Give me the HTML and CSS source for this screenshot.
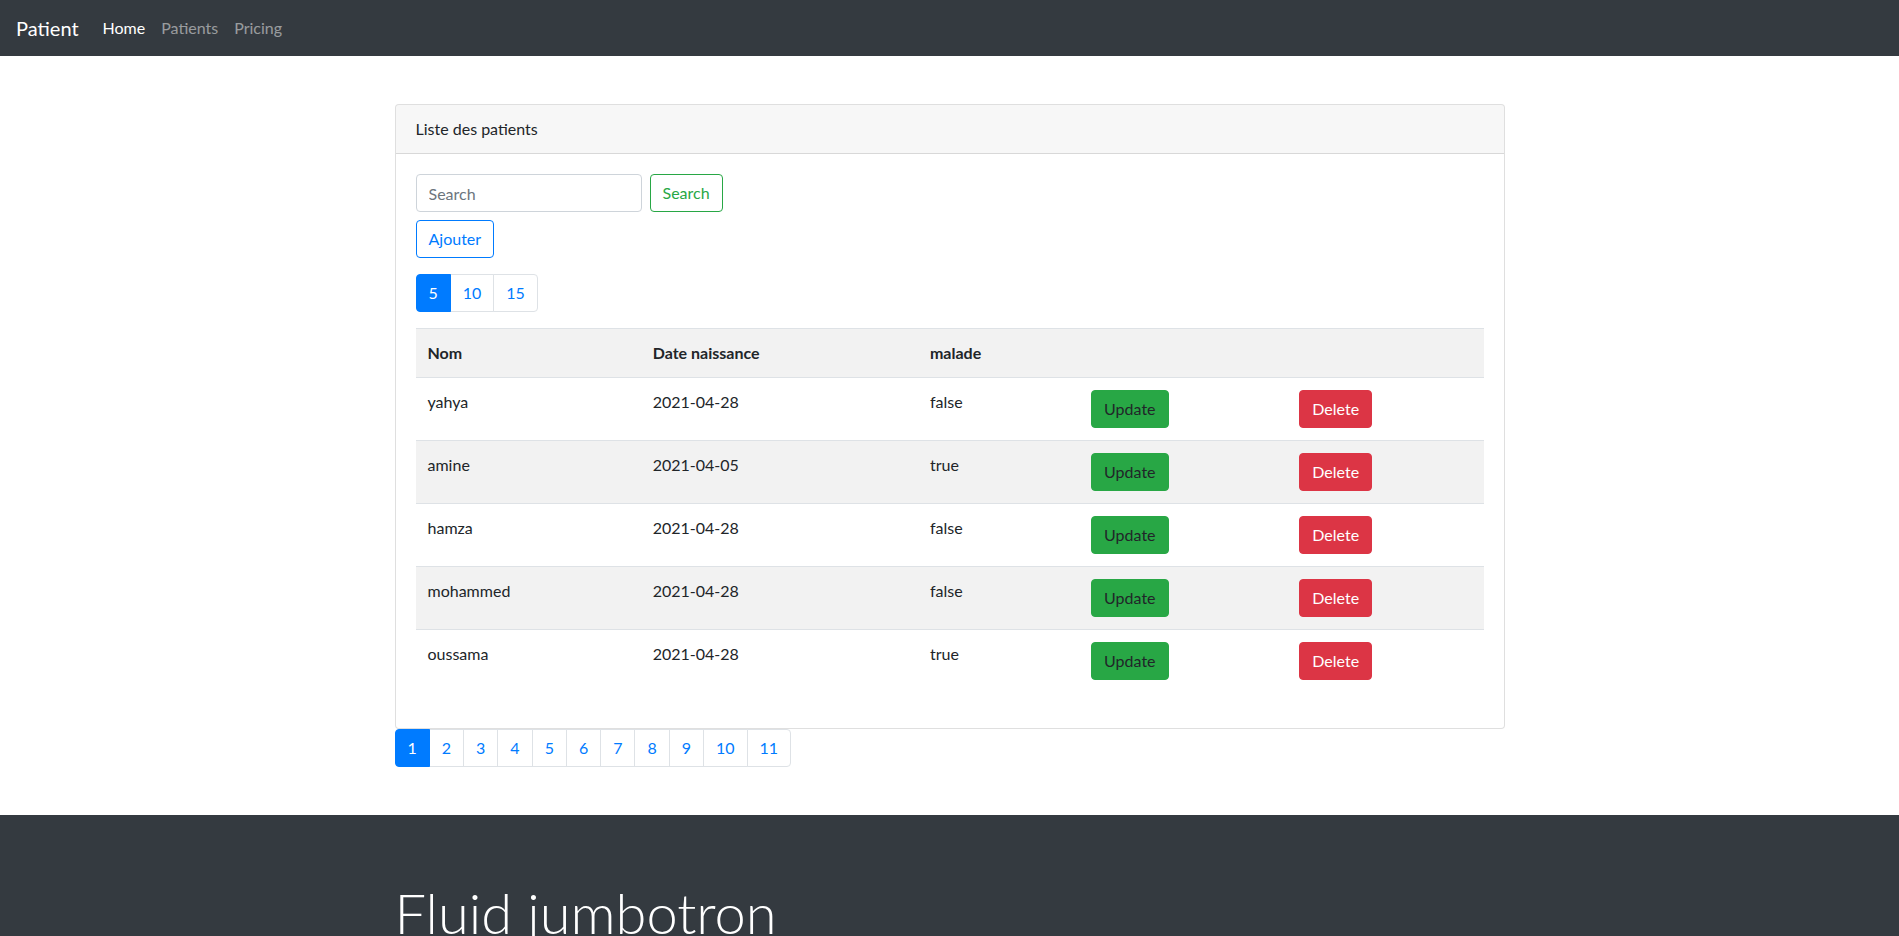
FILE: index.html
```html
<!DOCTYPE html>
<html lang="fr">
<head>
<meta charset="utf-8">
<title>Patients</title>
<link rel="stylesheet" href="styles.css">
</head>
<body>
<nav class="navbar">
  <a class="brand" href="#">Patient</a>
  <ul class="nav">
    <li><a class="nav-link active" href="#">Home</a></li>
    <li><a class="nav-link" href="#">Patients</a></li>
    <li><a class="nav-link" href="#">Pricing</a></li>
  </ul>
</nav>

<main class="container">
  <section class="card">
    <div class="card-header">Liste des patients</div>
    <div class="card-body">
      <form class="search-form">
        <input class="form-control" type="text" placeholder="Search">
        <button class="btn btn-outline-success" type="button">Search</button>
      </form>
      <a class="btn btn-outline-primary" href="#">Ajouter</a>
      <ul class="pagination size-pager">
        <li class="page-item active"><a class="page-link" href="#">5</a></li>
        <li class="page-item"><a class="page-link" href="#">10</a></li>
        <li class="page-item"><a class="page-link" href="#">15</a></li>
      </ul>
      <table class="table">
        <colgroup>
          <col class="c-nom"><col class="c-date"><col class="c-malade"><col class="c-upd"><col class="c-del">
        </colgroup>
        <tr><th>Nom</th><th>Date naissance</th><th>malade</th><th></th><th></th></tr>
        <tr><td>yahya</td><td>2021-04-28</td><td>false</td><td><a class="btn btn-success" href="#">Update</a></td><td><a class="btn btn-danger" href="#">Delete</a></td></tr>
        <tr><td>amine</td><td>2021-04-05</td><td>true</td><td><a class="btn btn-success" href="#">Update</a></td><td><a class="btn btn-danger" href="#">Delete</a></td></tr>
        <tr><td>hamza</td><td>2021-04-28</td><td>false</td><td><a class="btn btn-success" href="#">Update</a></td><td><a class="btn btn-danger" href="#">Delete</a></td></tr>
        <tr><td>mohammed</td><td>2021-04-28</td><td>false</td><td><a class="btn btn-success" href="#">Update</a></td><td><a class="btn btn-danger" href="#">Delete</a></td></tr>
        <tr><td>oussama</td><td>2021-04-28</td><td>true</td><td><a class="btn btn-success" href="#">Update</a></td><td><a class="btn btn-danger" href="#">Delete</a></td></tr>
      </table>
    </div>
  </section>
  <ul class="pagination page-pager">
    <li class="page-item active"><a class="page-link" href="#">1</a></li>
    <li class="page-item"><a class="page-link" href="#">2</a></li>
    <li class="page-item"><a class="page-link" href="#">3</a></li>
    <li class="page-item"><a class="page-link" href="#">4</a></li>
    <li class="page-item"><a class="page-link" href="#">5</a></li>
    <li class="page-item"><a class="page-link" href="#">6</a></li>
    <li class="page-item"><a class="page-link" href="#">7</a></li>
    <li class="page-item"><a class="page-link" href="#">8</a></li>
    <li class="page-item"><a class="page-link" href="#">9</a></li>
    <li class="page-item"><a class="page-link" href="#">10</a></li>
    <li class="page-item"><a class="page-link" href="#">11</a></li>
  </ul>
</main>

<footer class="jumbotron">
  <div class="container">
    <h1 class="display-4">Fluid jumbotron</h1>
    <p class="lead">This is a modified jumbotron that occupies the entire horizontal space of its parent.</p>
  </div>
</footer>
</body>
</html>
```
FILE: styles.css
```css
* { box-sizing: border-box; }

body {
  margin: 0;
  font-family: "Lato", "Liberation Sans", sans-serif;
  font-size: 16px;
  line-height: 1.5;
  color: #212529;
  background: #fff;
}

a { text-decoration: none; }

.navbar {
  display: flex;
  align-items: center;
  height: 56px;
  padding: 8px 16px;
  background: #343a40;
}
.brand {
  font-size: 20px;
  line-height: 30px;
  padding: 5px 0;
  margin-right: 16px;
  color: #fff;
}
.nav {
  display: flex;
  list-style: none;
  margin: 0;
  padding: 0;
}
.nav-link {
  display: block;
  padding: 8px;
  color: rgba(255,255,255,.5);
}
.nav-link.active { color: #fff; }

.container {
  width: 1140px;
  margin: 0 auto;
  padding: 0 15px;
}

.card {
  margin-top: 48px;
  border: 1px solid rgba(0,0,0,.125);
  border-radius: 4px;
  background: #fff;
}
.card-header {
  padding: 12px 20px;
  background: rgba(0,0,0,.03);
  border-bottom: 1px solid rgba(0,0,0,.125);
  border-radius: 3px 3px 0 0;
}
.card-body {
  padding: 20px;
}

.search-form {
  display: flex;
  gap: 8px;
  margin-bottom: 8px;
}
.form-control {
  width: 226px;
  height: 38px;
  padding: 6px 12px;
  font: inherit;
  color: #495057;
  border: 1px solid #ced4da;
  border-radius: 4px;
}
.form-control::placeholder { color: #6c757d; }

.btn {
  display: inline-block;
  padding: 6px 12px;
  font: inherit;
  line-height: 24px;
  border: 1px solid transparent;
  border-radius: 4px;
  background: transparent;
  cursor: pointer;
  vertical-align: middle;
}
.btn-outline-success { color: #28a745; border-color: #28a745; }
.btn-outline-primary { color: #007bff; border-color: #007bff; }
.btn-success { color: #212529; background: #28a745; border-color: #28a745; }
.btn-danger { color: #fff; background: #dc3545; border-color: #dc3545; }

.pagination {
  display: flex;
  list-style: none;
  padding: 0;
  margin: 0;
}
.size-pager { margin: 16px 0; }
.page-pager { margin: 0 0 48px; }
.page-link {
  display: block;
  padding: 8px 12px;
  line-height: 20px;
  color: #007bff;
  background: #fff;
  border: 1px solid #dee2e6;
  margin-left: -1px;
}
.page-item:first-child .page-link {
  margin-left: 0;
  border-radius: 4px 0 0 4px;
}
.page-item:last-child .page-link { border-radius: 0 4px 4px 0; }
.page-item.active .page-link {
  color: #fff;
  background: #007bff;
  border-color: #007bff;
  position: relative;
}

.table {
  width: 100%;
  border-collapse: collapse;
  table-layout: fixed;
  margin-bottom: 16px;
}
.c-nom { width: 225px; }
.c-date { width: 277px; }
.c-malade { width: 161px; }
.c-upd { width: 208px; }
.c-del { width: 196px; }
.table th, .table td {
  padding: 12px;
  text-align: left;
  vertical-align: top;
  border-top: 1px solid #dee2e6;
}
.table th { font-weight: 700; }
.table tr:nth-child(odd) { background: rgba(0,0,0,.05); }

.jumbotron {
  background: #343a40;
  color: #fff;
  padding: 64px 0;
}
.display-4 {
  margin: 0 0 8px;
  font-size: 56px;
  font-weight: 300;
  line-height: 1.2;
}
.lead {
  margin: 0;
  font-size: 20px;
  font-weight: 300;
}
```
